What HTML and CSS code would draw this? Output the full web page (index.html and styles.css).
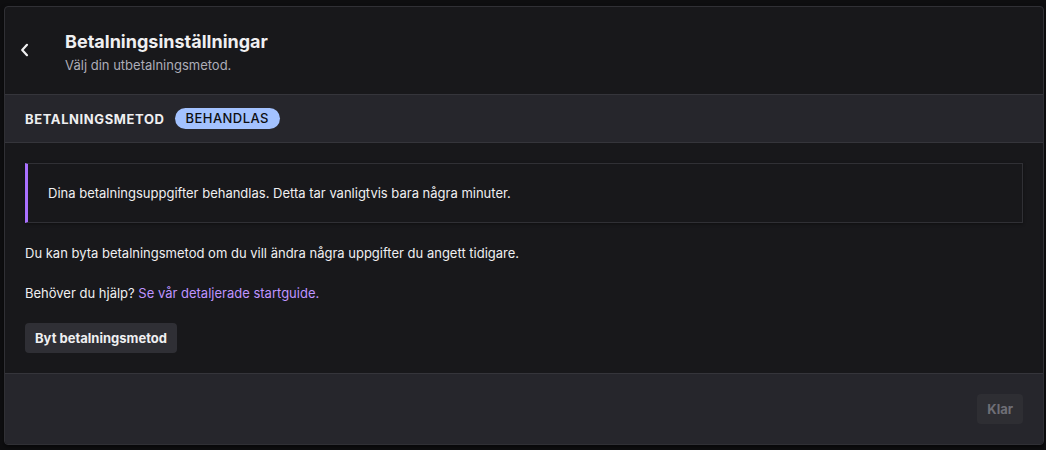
FILE: index.html
```
<!DOCTYPE html>
<html lang="sv">
<head>
<meta charset="utf-8">
<link rel="stylesheet" href="styles.css">
</head>
<body>
<div class="card">
  <div class="header">
    <button class="back" aria-label="Tillbaka">
      <svg width="10" height="14" viewBox="0 0 10 14"><path d="M7 1.8 L2.2 7 L7 12.2" fill="none" stroke="#efeff1" stroke-width="2.2" stroke-linecap="round" stroke-linejoin="round"/></svg>
    </button>
    <div class="titles">
      <div class="title">Betalningsinställningar</div>
      <div class="subtitle">Välj din utbetalningsmetod.</div>
    </div>
  </div>
  <div class="section-head">
    <span class="section-title">BETALNINGSMETOD</span>
    <span class="badge">BEHANDLAS</span>
  </div>
  <div class="body">
    <div class="alert">Dina betalningsuppgifter behandlas. Detta tar vanligtvis bara några minuter.</div>
    <p class="text">Du kan byta betalningsmetod om du vill ändra några uppgifter du angett tidigare.</p>
    <p class="text">Behöver du hjälp? <a class="link" href="#">Se vår detaljerade startguide.</a></p>
    <button class="btn">Byt betalningsmetod</button>
  </div>
  <div class="footer">
    <button class="btn btn-disabled" disabled>Klar</button>
  </div>
</div>
</body>
</html>
```
FILE: styles.css
```
* { box-sizing: border-box; }
html, body { height: 100%; }
body {
  margin: 0;
  padding: 6px 2px 0 4px;
  background: #0e0e10;
  font-family: Inter, "Noto Sans", sans-serif;
  color: #efeff1;
  font-size: 13px;
}
.card {
  border: 1px solid #303035;
  border-radius: 4px;
  background: #18181b;
  overflow: hidden;
  box-shadow: 0 2px 4px rgba(0,0,0,0.5);
}
.header {
  display: flex;
  align-items: center;
  padding: 23px 20px 20px 10px;
}
.back {
  background: none;
  border: 0;
  padding: 0;
  width: 20px;
  height: 20px;
  display: flex;
  align-items: center;
  justify-content: center;
  margin-right: 30px;
  margin-bottom: 4px;
}
.titles { display: flex; flex-direction: column; }
.title {
  font-size: 18px;
  font-weight: 700;
  line-height: 24px;
  color: #efeff1;
}
.subtitle {
  margin-top: 2px;
  font-size: 13px;
  line-height: 18px;
  color: #adadb8;
}
.section-head {
  display: flex;
  align-items: center;
  gap: 10px;
  height: 49px;
  padding: 0 20px;
  background: #26262c;
  border-top: 1px solid #35353b;
  border-bottom: 1px solid #35353b;
}
.section-title {
  font-weight: 700;
  font-size: 13px;
  letter-spacing: 0.6px;
  color: #efeff1;
}
.badge {
  background: #a3c2ff;
  color: #0e0e10;
  font-weight: 500;
  font-size: 13px;
  letter-spacing: 0.45px;
  line-height: 21px;
  height: 21px;
  padding: 0 11px;
  border-radius: 11px;
}
.body {
  padding: 20px;
}
.alert {
  border: 1px solid #303035;
  border-left: 3px solid #a970ff;
  height: 60px;
  display: flex;
  align-items: center;
  padding-left: 20px;
  line-height: 20px;
  box-shadow: 0 1px 3px rgba(0,0,0,0.4);
}
.text {
  margin: 20px 0 0 0;
  line-height: 20px;
}
.link { color: #bf94ff; text-decoration: none; }
.btn {
  margin-top: 20px;
  display: inline-flex;
  align-items: center;
  height: 30px;
  padding: 0 10px;
  background: #2f2f35;
  color: #efeff1;
  border: 0;
  border-radius: 4px;
  font-family: inherit;
  font-weight: 700;
  font-size: 13px;
}
.footer {
  display: flex;
  justify-content: flex-end;
  padding: 0 20px 20px 20px;
  background: #26262c;
  border-top: 1px solid #35353b;
}
.btn-disabled {
  background: #2e2e33;
  color: #6e6e76;
}
```
